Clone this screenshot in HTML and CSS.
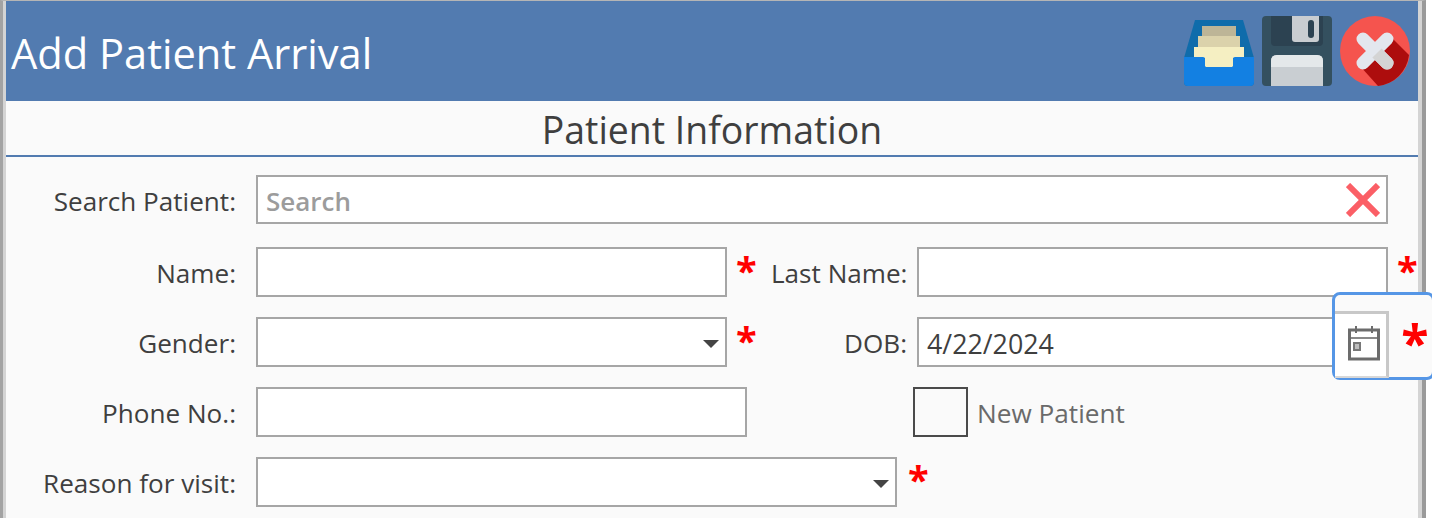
FILE: index.html
```html
<!DOCTYPE html>
<html lang="en">
<head>
    <meta charset="UTF-8">
    <title>Add Patient Arrival</title>
    <link rel="stylesheet" href="styles.css">
</head>
<body>
    <div class="window">
        <div class="title-bar">
            <h1>Add Patient Arrival</h1>
            <div class="actions">
                <svg class="icon" viewBox="0 0 70 70">
                    <path fill="#0f6cab" d="M11 4H59L70 42V66Q70 70 66 70H4Q0 70 0 66V42Z"/>
                    <rect x="18" y="10" width="34" height="11" fill="#bdb597"/>
                    <rect x="14" y="20" width="42" height="12" fill="#dbd2ab"/>
                    <path fill="#f5efc2" d="M10 31H60V42H49V50Q49 51 48 51H22Q21 51 21 50V42H10Z"/>
                    <path fill="#1380e2" d="M0 41H19Q21 41 21 43V50Q21 51 22 51H48Q49 51 49 50V43Q49 41 51 41H70V66Q70 70 66 70H4Q0 70 0 66Z"/>
                </svg>
                <svg class="icon" viewBox="0 0 70 70">
                    <rect width="70" height="70" rx="4" fill="#34505f"/>
                    <path fill="#2c4251" d="M9 0H61V26Q61 30 57 30H13Q9 30 9 26Z"/>
                    <path fill="#c9cdd1" d="M30 0H57V23Q57 26 54 26H33Q30 26 30 23Z"/>
                    <rect x="46" y="4" width="6" height="18" rx="3" fill="#2c4251"/>
                    <path fill="#c9ced2" d="M9 70V45Q9 39 15 39H55Q61 39 61 45V70Z"/>
                    <path fill="#e4e8ea" d="M9 51V45Q9 39 15 39H55Q61 39 61 45V51Z"/>
                </svg>
                <svg class="icon" viewBox="0 0 70 70">
                    <circle cx="35" cy="35" r="35" fill="#f5544e"/>
                    <path fill="#ad0d0d" d="M52 22L69 39A35 35 0 0 1 38 70L20 50Z"/>
                    <path d="M23 23L47 47M47 23L23 47" stroke="#e3e7ee" stroke-width="13" stroke-linecap="round" fill="none"/>
                    <path d="M37 37L47 47" stroke="#d4d4d4" stroke-width="13" fill="none"/>
                    <path d="M47 47L47.1 47.1" stroke="#d4d4d4" stroke-width="13" stroke-linecap="round" fill="none"/>
                </svg>
            </div>
        </div>

        <h2 class="section-title">Patient Information</h2>

        <div class="form">
            <div class="row">
                <label class="label">Search Patient:</label>
                <div class="input search-box">
                    <span class="placeholder">Search</span>
                    <svg class="clear" viewBox="0 0 34 34">
                        <path d="M2 2L32 32M32 2L2 32" stroke="#fb5f66" stroke-width="6" fill="none"/>
                    </svg>
                </div>
            </div>

            <div class="row">
                <label class="label">Name:</label>
                <div class="input w-name"></div>
                <span class="req">*</span>
                <label class="label-2">Last Name:</label>
                <div class="input w-right"></div>
                <span class="req req-last">*</span>
            </div>

            <div class="row">
                <label class="label">Gender:</label>
                <div class="input w-name select"><span class="arrow"></span></div>
                <span class="req">*</span>
                <label class="label-2">DOB:</label>
                <div class="input w-right date">4/22/2024</div>
            </div>

            <div class="row">
                <label class="label">Phone No.:</label>
                <div class="input w-phone"></div>
                <div class="check-wrap">
                    <span class="check"></span>
                    <span class="check-text">New Patient</span>
                </div>
            </div>

            <div class="row">
                <label class="label">Reason for visit:</label>
                <div class="input w-reason select"><span class="arrow"></span></div>
                <span class="req req-reason">*</span>
            </div>
        </div>

        <div class="date-popup">
            <div class="date-btn">
                <svg viewBox="0 0 34 36" width="34" height="36">
                    <rect x="2.5" y="5" width="29" height="29" fill="none" stroke="#6c6c6c" stroke-width="3"/>
                    <path d="M2 13H32" stroke="#6c6c6c" stroke-width="1.6"/>
                    <path d="M9 1V8M25 1V8" stroke="#6c6c6c" stroke-width="2"/>
                    <rect x="7" y="18" width="6" height="7" fill="#bdbdbd" stroke="#777" stroke-width="2"/>
                </svg>
            </div>
            <span class="req req-popup">*</span>
        </div>
    </div>
</body>
</html>
```

FILE: styles.css
```css
html, body {
    margin: 0;
    padding: 0;
    background-color: #fff;
}
body {
    font-family: "Open Sans", sans-serif;
    color: #3f3f3f;
    height: 518px;
    overflow: hidden;
}
.window {
    position: relative;
    width: 1412px;
    height: 517px;
    background-color: #fafafa;
    margin-right: 6px;
    border-top: 1px solid #b5b5b5;
    border-left: 3px solid #a3a3a3;
    border-right: 4px solid #9a9a9a;
    padding: 0 4px 0 3px;
    box-shadow: inset 3px 0 0 #d4d4d4, inset -4px 0 0 #d4d4d4;
}
.title-bar {
    display: flex;
    justify-content: space-between;
    align-items: center;
    height: 100px;
    background-color: #527bb0;
}
h1 {
    margin: 4px 0 0 5px;
    font-size: 41.6px;
    font-weight: 400;
    color: #fff;
}
.actions {
    display: flex;
    gap: 8px;
    margin-right: 8px;
    margin-top: -1px;
}
.icon {
    width: 70px;
    height: 70px;
}
.section-title {
    margin: 0;
    height: 54px;
    line-height: 58px;
    text-align: center;
    font-size: 37.4px;
    font-weight: 400;
    color: #3f3f3f;
    border-bottom: 2px solid #527bb0;
}
.form {
    padding-top: 18px;
}
.row {
    display: flex;
    align-items: center;
    height: 50px;
    margin-bottom: 20px;
    font-size: 26.1px;
}
.row:first-child {
    height: 49px;
    margin-bottom: 23px;
}
.label {
    flex-shrink: 0;
    width: 230px;
    margin-right: 20px;
    padding-top: 2px;
    text-align: right;
    white-space: nowrap;
}
.label-2 {
    flex-shrink: 0;
    width: 136px;
    margin-right: 10px;
    padding-top: 2px;
    text-align: right;
    white-space: nowrap;
}
.input {
    display: flex;
    align-items: center;
    flex-shrink: 0;
    box-sizing: border-box;
    height: 100%;
    background-color: #fff;
    border: 2px solid #a6a6a6;
}
.search-box {
    width: 1132px;
    justify-content: space-between;
    padding: 0 6px 0 8px;
}
.placeholder {
    padding-top: 2px;
    color: #9c9c9c;
    font-size: 26px;
    font-weight: 600;
}
.clear {
    width: 34px;
    height: 34px;
}
.w-name {
    width: 471px;
}
.w-right {
    width: 471px;
}
.w-phone {
    width: 491px;
}
.w-reason {
    width: 641px;
}
.select {
    justify-content: flex-end;
    padding-right: 6px;
}
.arrow {
    width: 0;
    height: 0;
    margin-top: 3px;
    border-left: 8px solid transparent;
    border-right: 8px solid transparent;
    border-top: 8px solid #444;
}
.date {
    padding: 2px 0 0 8px;
    font-size: 26.8px;
}
.req {
    width: 44px;
    box-sizing: border-box;
    padding-left: 9px;
    margin-top: -4px;
    color: #f00;
    font-size: 38px;
    font-weight: 700;
    line-height: 1;
}
.req-last {
    width: 30px;
}
.req-reason {
    padding-left: 11px;
    margin-top: -6px;
}
.check-wrap {
    display: flex;
    align-items: center;
    margin-left: 166px;
    height: 50px;
}
.check {
    box-sizing: border-box;
    width: 55px;
    height: 50px;
    border: 2px solid #4a4a4a;
}
.check-text {
    margin-left: 9px;
    padding-top: 2px;
    color: #6a6a6a;
    font-size: 26.2px;
}
.date-popup {
    position: absolute;
    left: 1329px;
    top: 291px;
    box-sizing: border-box;
    display: flex;
    width: 103px;
    height: 88px;
    padding-top: 16px;
    background-color: #fafafa;
    border: 3px solid #5596e6;
    border-radius: 8px;
}
.date-btn {
    display: flex;
    align-items: center;
    justify-content: center;
    box-sizing: border-box;
    width: 56px;
    height: 67px;
    padding: 0 0 5px 6px;
    background-color: #fff;
    border-top: 3px solid #c8c8c8;
    border-right: 3px solid #c8c8c8;
    border-bottom: 2px solid #d8d8d8;
}
.req-popup {
    padding-left: 12px;
    margin-top: 6px;
    font-size: 50px;
}
```
